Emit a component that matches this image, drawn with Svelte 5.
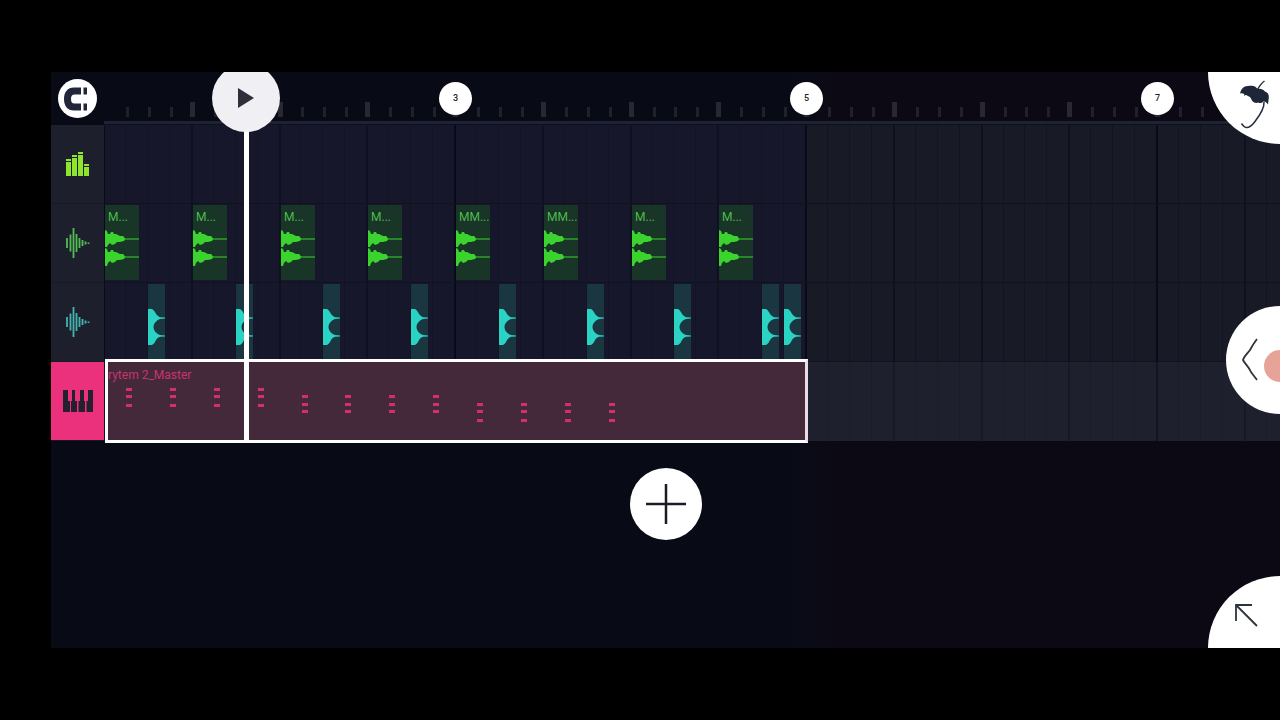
<script>
	const STEP = 21.94;
	const steps = Array.from({ length: 120 }, (_, i) => i);
	const labels = [3, 5, 7];

	const pos = (step) => Math.round(step * STEP);

	const kicks = [
		{ step: 0, name: "M..." },
		{ step: 4, name: "M..." },
		{ step: 8, name: "M..." },
		{ step: 12, name: "M..." },
		{ step: 16, name: "MM..." },
		{ step: 20, name: "MM..." },
		{ step: 24, name: "M..." },
		{ step: 28, name: "M..." },
	];
	const hats = [2, 6, 10, 14, 18, 22, 26, 30, 31];

	const chords = [
		[29, 36, 45],
		[36, 44, 51],
		[44, 51, 60],
	];
	const notes = [];
	for (let i = 0; i < 12; i++) {
		for (const y of chords[Math.floor(i / 4)]) {
			notes.push({ x: 21 + pos(i * 2), y });
		}
	}

	let selected = $state("keys");
	let playing = $state(false);
	let snap = $state(true);
	let playhead = 6.4;
</script>

{#snippet wave()}
	<svg class="icon" width="24" height="32" viewBox="0 0 24 32">
		<path
			d="M1 11v10M4.500 7.500v17M7.500 1v30M10.500 7v18M13.500 11v10M16.500 13v6M19.500 14.500v3M22.500 15.500v1.500"
			fill="none"
			stroke="currentColor"
			stroke-width="1.800"
		/>
	</svg>
{/snippet}

<main>
	<header>
		<div class="corner">
			<button class="magnet" aria-label="Snap to grid" aria-pressed={snap} onclick={() => (snap = !snap)}>
				<svg width="30" height="26" viewBox="0 0 30 26">
					<path
						d="M18 1.500h-7C4.500 1.500 1 6 1 13s3.500 11.500 10 11.500h7v-7h-6.500c-2.500 0-3.500-1.500-3.500-4.500s1-4.500 3.500-4.500H18zM20.500 1.500h3.500v7h-3.500zM20.500 17.500h3.500v7h-3.500z"
					/>
				</svg>
			</button>
		</div>
		<div class="ruler">
			<svg class="ticks" width="100%" height="100%">
				{#each steps as s}
					{#if s > 0 && s % 4 === 0}
						<rect x={pos(s) - 2} y="30" width="5" height="15" fill="#272832" />
					{:else if s > 0}
						<rect x={pos(s)} y="35" width="3" height="10" fill="#20212b" />
					{/if}
				{/each}
			</svg>
			{#each labels as bar}
				<span class="bar" style="left: {pos((bar - 1) * 8)}px">{bar}</span>
			{/each}
		</div>
	</header>

	<section class="tracks">
		<nav>
			<button class="mixer" class:active={selected === "mixer"} aria-label="Mixer" onclick={() => (selected = "mixer")}>
				<svg class="icon" width="24" height="24" viewBox="0 0 24 24" fill="#8fe52c">
					<path d="M0 7h5v2H0zM0 10h5v14H0zM6 3h5v2H6zM6 6h5v18H6zM12 0h5v2h-5zM12 3h5v21h-5zM18 12h5v2h-5zM18 15h5v9h-5z" />
				</svg>
			</button>
			<button class="kick" class:active={selected === "kick"} aria-label="Audio track 1" onclick={() => (selected = "kick")}>
				{@render wave()}
			</button>
			<button class="hat" class:active={selected === "hat"} aria-label="Audio track 2" onclick={() => (selected = "hat")}>
				{@render wave()}
			</button>
			<button class="keys" class:active={selected === "keys"} aria-label="Instrument track" onclick={() => (selected = "keys")}>
				<svg class="icon" width="30" height="22" viewBox="0 0 30 22" fill="#25202f">
					<path d="M0 0h5v11h2v11H0zM9 0h3v11h2v11H8V11h1zM17 0h4v11h1v11h-6.500V11H17zM25 0h5v22h-6.500V11H25z" />
				</svg>
			</button>
		</nav>

		<div class="lanes">
			<svg class="grid" width="100%" height="100%">
				<rect class="song" width={pos(32)} height="100%" />
				{#each steps as s}
					<rect
						class={s % 16 === 0 ? "l4" : s % 4 === 0 ? "l2" : "l1"}
						x={pos(s) - 1}
						width={s % 4 === 0 ? 2 : 1}
						height="100%"
					/>
				{/each}
			</svg>
			<div class="lane"></div>
			<div class="lane">
				{#each kicks as clip}
					<div class="clip green" style="left: {pos(clip.step) + 1}px">
						<span>{clip.name}</span>
						<svg width="34" height="38" viewBox="0 0 34 38">
							<path
								d="M0 2l2 1 1 3h2l1-2h2l1 2h2l2 1 2 1h3l1 1 1 1.500h14v1H20L19 13l-4 1h-3l-2 2-3 1-2-2-2 2-1 2H0z"
							/>
							<path
								d="M0 20l2 1 1 3h2l1-2h2l1 2h2l2 1 2 1h3l1 1 1 1.500h14v1H20L19 31l-4 1h-3l-2 2-3 1-2-2-2 2-1 3H0z"
							/>
						</svg>
					</div>
				{/each}
			</div>
			<div class="lane">
				{#each hats as s}
					<div class="clip teal" style="left: {pos(s)}px">
						<svg width="17" height="40" viewBox="0 0 17 40">
							<path
								d="M0 2h4c2 1 3 3 4 5 1 1.500 3 3 4 3.200l5 .3v1l-5 .5c-3 1-6.500 4-6.500 8s3.500 7 6.500 8l5 .5v1l-5 .3c-1 .2-3 1.700-4 3.200-1 2-2 4-4 5H0z"
							/>
						</svg>
					</div>
				{/each}
			</div>
			<div class="lane last">
				<div class="pattern" style="width: {pos(32) + 1}px">
					<span>rytem 2_Master</span>
					<svg width="100%" height="100%">
						{#each notes as n}
							<rect x={n.x - 3} y={n.y - 3} width="6" height="3" />
						{/each}
					</svg>
				</div>
			</div>
		</div>
	</section>

	<footer>
		<button class="add" aria-label="Add track">
			<svg width="40" height="40" viewBox="0 0 40 40">
				<path d="M0 20h40M20 0v40" stroke="#1b1c25" stroke-width="2.500" />
			</svg>
		</button>
	</footer>

	<div class="playhead" style="left: {pos(playhead) + 53}px">
		<button aria-label="Play" aria-pressed={playing} onclick={() => (playing = !playing)}>
			<svg width="16" height="20" viewBox="0 0 16 20"><path d="M0 0l16 10L0 20z" fill="#302e3b" /></svg>
		</button>
	</div>

	<button class="round logo" aria-label="Main menu">
		<svg width="72" height="72" viewBox="0 0 72 72">
			<path
				d="M32 21.500c1-4 2.500-6 5-7 3-1 6-1 8.500-.5 2 .5 3 2 4.500 3 3-.5 5 .5 7 2.500 3 1 4 3 3.800 6l-.8 7c-1-2-3-3.500-4.800-3-1 1.500-3 2-5 1-2 .8-4 .5-6-1.500-1-2.500-2.500-5-4.500-5-1-1.500-2.500-1.500-3.500 0v-2c-1.500-.8-2.800-.8-4.200-.5z"
				fill="#1e2737"
			/>
			<path d="M56.500 9c-3 2-5 5-7 8.500M56 30c.5 6-4 13-9 19.500-3 4-6 6.500-9 6-2 0-3-2-4.500-4" fill="none" stroke="#262c38" stroke-width="1.500" />
		</svg>
	</button>
	<button class="round panel" aria-label="Open panel">
		<svg width="54" height="108" viewBox="0 0 54 108">
			<path d="M31 33c-3 4-5 7-7 11-2 3-6 6-7 10 2 4 6 7 8 12 2 3 4 5 6 8" fill="none" stroke="#30333a" stroke-width="1.800" />
			<circle cx="54" cy="60" r="16" fill="#e8a398" />
		</svg>
	</button>
	<button class="round expand" aria-label="Expand">
		<svg width="72" height="72" viewBox="0 0 72 72">
			<path d="M28 45V29h16M28 29l21 21" fill="none" stroke="#2c333c" stroke-width="1.800" />
		</svg>
	</button>
</main>

<style>
	:global(body) {
		background: #000;
	}
	main {
		position: relative;
		margin: 72px 0 72px 51px;
		overflow: hidden;
		background: linear-gradient(90deg, #080b16 740px, #0d0914 790px);
		font-family: Roboto, "Liberation Sans", sans-serif;
	}
	button {
		padding: 0;
		border: 0;
		background: #fff;
		cursor: pointer;
	}
	svg {
		display: block;
	}

	header {
		display: flex;
		height: 53px;
	}
	.corner {
		display: flex;
		flex: none;
		align-items: center;
		justify-content: center;
		width: 53px;
	}
	.magnet {
		display: flex;
		align-items: center;
		justify-content: center;
		width: 39px;
		height: 39px;
		border-radius: 50%;
	}
	.magnet svg {
		fill: #22263a;
	}
	.ruler {
		position: relative;
		flex: 1;
		box-sizing: border-box;
		border-bottom: 1px solid #0c1122;
		box-shadow: inset 0 -3px #1e2334;
	}
	.bar {
		position: absolute;
		top: 10px;
		width: 33px;
		margin-left: -16px;
		border-radius: 50%;
		background: #fff;
		color: #222;
		font-size: 9px;
		font-weight: 500;
		line-height: 33px;
		text-align: center;
	}

	.tracks {
		display: flex;
	}
	nav {
		flex: none;
		width: 53px;
	}
	nav button {
		display: flex;
		align-items: center;
		justify-content: center;
		width: 100%;
		height: 79px;
		border-bottom: 1px solid #171923;
		background: #1d202c;
	}
	.kick {
		color: #51bd55;
	}
	.hat {
		color: #45b4b0;
	}
	nav .active {
		background: #eb317c;
	}

	.lanes {
		position: relative;
		flex: 1;
		min-width: 0;
		background: #181a25;
	}
	.grid {
		position: absolute;
		inset: 0;
	}
	.song {
		fill: #17172b;
	}
	.l1 {
		fill: #121422;
	}
	.l2 {
		fill: #0f1020;
	}
	.l4 {
		fill: #080a18;
	}
	.lane {
		position: relative;
		box-sizing: border-box;
		height: 79px;
		border-bottom: 1px solid #11121f;
	}
	.last {
		border: 0;
		background: rgba(60, 60, 80, 0.2);
	}
	.clip {
		position: absolute;
		top: 1px;
		height: 75px;
	}
	.green {
		width: 34px;
		background: #183527;
		color: #4cba4c;
		fill: #3bd32e;
	}
	.teal {
		width: 17px;
		background: #193641;
		fill: #2bd3c5;
	}
	.clip span,
	.pattern span {
		position: absolute;
		top: 5px;
		left: 3px;
		font-size: 12px;
		line-height: 14px;
		white-space: nowrap;
	}
	.clip svg {
		position: absolute;
		top: 23px;
		left: 0;
	}
	.pattern {
		position: absolute;
		top: -3px;
		left: 1px;
		box-sizing: border-box;
		height: 84px;
		border: 3px solid #fff;
		border-right-color: #ecdbe6;
		background: #44293b;
		color: #c9336b;
		fill: #d32f6e;
	}
	.pattern span {
		top: 6px;
		left: 0;
	}

	footer {
		display: flex;
		justify-content: center;
		padding: 27px 0 108px;
	}
	.add {
		display: flex;
		align-items: center;
		justify-content: center;
		width: 72px;
		height: 72px;
		border-radius: 50%;
	}

	.playhead {
		position: absolute;
		top: 0;
		width: 5px;
		height: 369px;
		background: #fff;
	}
	.playhead button {
		position: absolute;
		top: -8px;
		left: -32px;
		display: flex;
		align-items: center;
		justify-content: center;
		width: 68px;
		height: 68px;
		border-radius: 50%;
		background: #f0eff3;
	}

	.round {
		position: absolute;
		right: 0;
	}
	.logo {
		top: 0;
		border-radius: 0 0 0 72px;
	}
	.panel {
		top: 234px;
		border-radius: 54px 0 0 54px;
	}
	.expand {
		bottom: 0;
		border-radius: 72px 0 0 0;
	}
</style>
